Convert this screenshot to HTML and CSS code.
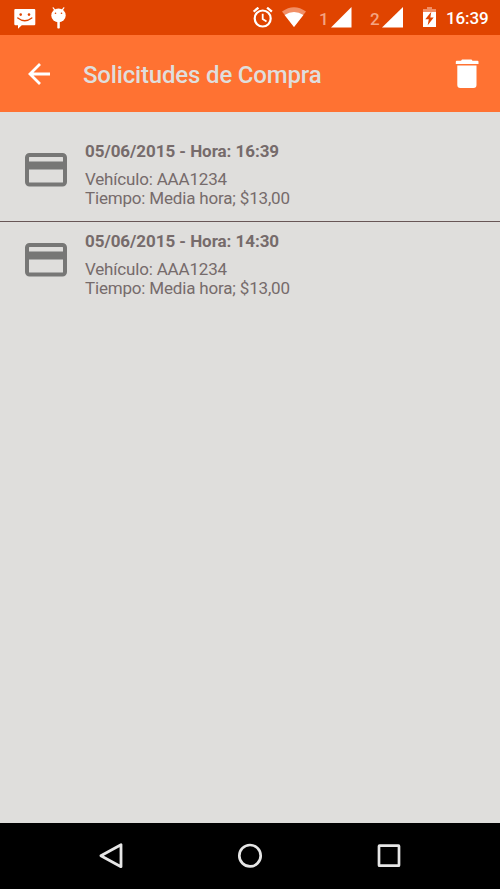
FILE: index.html
```
<!DOCTYPE html>
<html lang="es">
<head>
  <meta charset="UTF-8">
  <meta name="viewport" content="width=device-width, initial-scale=1.0">
  <title>Solicitudes de Compra</title>
  <link rel="stylesheet" href="styles.css">
</head>
<body>
  <div class="status-bar">
    <svg class="message" width="22" height="20" viewBox="0 0 22 20">
      <path fill="#fff" d="M1.300 0h19q1 0 1 1.200v13.800q0 1.200-1 1.200H7.800L4 19.800V16.200H1.300Q0.300 16.200 0.300 15V1.200Q0.300 0 1.300 0z"/>
      <path fill="none" stroke="#e04400" stroke-width="1.400" stroke-linecap="round" d="M3.800 9q7 5.400 14 0"/>
      <circle cx="6.700" cy="5.600" r="1.300" fill="#e04400"/>
      <circle cx="15" cy="5.600" r="1.300" fill="#e04400"/>
    </svg>
    <svg class="droid" width="15" height="22" viewBox="0 0 15 22">
      <g fill="#fff">
        <ellipse cx="7.500" cy="8.400" rx="7.200" ry="6.900"/>
        <rect x="6.300" y="14" width="2.500" height="7.500" rx="0.800"/>
      </g>
      <path stroke="#fff" stroke-width="1.200" stroke-linecap="round" d="M2.200 0.800l2 2.800M12.800 0.800l-2 2.800"/>
      <circle cx="4.500" cy="6.300" r="0.800" fill="#e04400"/>
      <circle cx="10.500" cy="6.300" r="0.800" fill="#e04400"/>
    </svg>
    <div class="status-right">
      <svg class="alarm" width="20" height="21" viewBox="0 0 20 21">
        <g fill="none" stroke="#fff">
          <circle cx="9.700" cy="11.500" r="8" stroke-width="2.200"/>
          <path stroke-width="2.300" d="M0.600 4.700l4.800-4M18.900 4.700l-4.800-4"/>
          <path stroke-width="1.800" d="M9.700 6.800v5.200l3.800 2.400"/>
        </g>
      </svg>
      <svg class="wifi" width="24" height="20" viewBox="0 0 24 20">
        <path fill="#f18f66" d="M0 4.600Q12-4.200 24 4.600L12 20z"/>
        <path fill="#fff" d="M2.600 8Q12 2.200 21.400 8L12 20z"/>
      </svg>
      <span class="sim sim-one">1</span>
      <svg class="signal" width="21" height="21" viewBox="0 0 21 21"><path fill="#fff" d="M20.500 0v20.500H0z"/></svg>
      <span class="sim sim-two">2</span>
      <svg class="signal" width="21" height="21" viewBox="0 0 21 21"><path fill="#fff" d="M21 0v20.500H0z"/></svg>
      <svg class="battery" width="13" height="20" viewBox="0 0 13 20">
        <path fill="#f18f66" d="M4 0h5v2h4v3.500H0V2h4z"/>
        <path fill="#fff" d="M0 5h13v15H0z"/>
        <path fill="#e04400" d="M8.300 4.800L2.300 12.300h3.500L4.700 18.200l6-7.700H7.300z"/>
      </svg>
      <span class="clock">16:39</span>
    </div>
  </div>

  <header class="toolbar">
    <svg class="back" width="24" height="24" viewBox="0 0 24 24">
      <path fill="none" stroke="#fff" stroke-width="2.800" d="M13 2L3 12l10 10M3.200 12H23"/>
    </svg>
    <h1>Solicitudes de Compra</h1>
    <svg class="trash" width="24" height="30" viewBox="0 0 24 30">
      <path fill="#fff" d="M7 0.500h9.500l1 1.300h5q1 0 1 1v2.200H0.800V2.800q0-1 1-1H6zM2.300 6.500h19.200v19.500q0 3-3 3H5.300q-3 0-3-3z"/>
    </svg>
  </header>

  <main class="list">
    <div class="row">
      <svg class="card" width="42" height="34" viewBox="0 0 42 34">
        <rect x="2" y="2" width="38" height="29.500" rx="2.500" fill="none" stroke="#777776" stroke-width="4"/>
        <path fill="#777776" d="M2 8.500h38v8H2z"/>
      </svg>
      <div class="info">
        <h2>05/06/2015 - Hora: 16:39</h2>
        <p>Vehículo: AAA1234</p>
        <p>Tiempo: Media hora; $13,00</p>
      </div>
    </div>
    <div class="row">
      <svg class="card" width="42" height="34" viewBox="0 0 42 34">
        <rect x="2" y="2" width="38" height="29.500" rx="2.500" fill="none" stroke="#777776" stroke-width="4"/>
        <path fill="#777776" d="M2 8.500h38v8H2z"/>
      </svg>
      <div class="info">
        <h2>05/06/2015 - Hora: 14:30</h2>
        <p>Vehículo: AAA1234</p>
        <p>Tiempo: Media hora; $13,00</p>
      </div>
    </div>
  </main>

  <nav class="nav-bar">
    <svg width="26" height="28" viewBox="0 0 26 28">
      <path fill="none" stroke="#e6e6e6" stroke-width="2.800" stroke-linejoin="round" d="M23 2.700v22L2.900 13.700z"/>
    </svg>
    <svg width="26" height="28" viewBox="0 0 26 28">
      <circle cx="13" cy="13.700" r="10.700" fill="none" stroke="#e6e6e6" stroke-width="2.700"/>
    </svg>
    <svg width="26" height="28" viewBox="0 0 26 28">
      <rect x="3" y="3.700" width="20" height="20" rx="0.500" fill="none" stroke="#e6e6e6" stroke-width="2.700"/>
    </svg>
  </nav>
</body>
</html>
```
FILE: styles.css
```
* {
  box-sizing: border-box;
}
body {
  font-family: Roboto, sans-serif;
  background-color: #dfdedc;
  color: #766b6b;
  margin: 0;
  height: 100vh;
  display: flex;
  flex-direction: column;
  overflow: hidden;
}
svg {
  display: block;
  flex: none;
}
h1, h2, p {
  margin: 0;
  white-space: nowrap;
}
.status-bar {
  height: 35px;
  flex: none;
  background-color: #e04400;
  display: flex;
  align-items: flex-start;
  padding: 7px 10px 0 14px;
}
.message {
  margin-top: 2px;
}
.droid {
  margin-left: 15px;
}
.status-right {
  margin-left: auto;
  display: flex;
  align-items: flex-start;
}
.wifi {
  margin-left: 9px;
}
.sim {
  color: #f4a482;
  font-size: 17px;
  font-weight: 500;
  line-height: 25px;
  width: 10px;
}
.sim-one {
  margin: 0 2px 0 13px;
}
.sim-two {
  margin: 0 2px 0 18px;
}
.battery {
  margin-left: 20px;
}
.clock {
  color: #fff;
  font-size: 17px;
  font-weight: 500;
  line-height: 22px;
  letter-spacing: -0.1px;
  width: 44px;
  margin-left: 10px;
}
.toolbar {
  height: 77px;
  flex: none;
  background-color: #ff7232;
  display: flex;
  align-items: center;
  padding: 0 21px 0 27px;
}
h1 {
  color: #dfdedc;
  font-size: 24px;
  font-weight: 500;
  line-height: 28px;
  letter-spacing: -0.17px;
  margin: 2px 0 0 32px;
}
.trash {
  margin-left: auto;
}
.list {
  flex: 1;
  padding-top: 20px;
}
.row {
  display: flex;
  align-items: flex-start;
  height: 90px;
  padding: 9px 25px 0;
  border-bottom: 1px solid #685656;
}
.row:last-child {
  border-bottom: none;
}
.card {
  margin-top: 12px;
}
.info {
  margin-left: 18px;
}
h2 {
  font-size: 17px;
  font-weight: 700;
  line-height: 20px;
  letter-spacing: -0.05px;
  margin-bottom: 9px;
}
p {
  font-size: 17px;
  line-height: 19px;
  letter-spacing: -0.18px;
}
.nav-bar {
  height: 66px;
  flex: none;
  background-color: #000;
  display: flex;
  justify-content: space-between;
  padding: 19px 98px 0;
}
```
